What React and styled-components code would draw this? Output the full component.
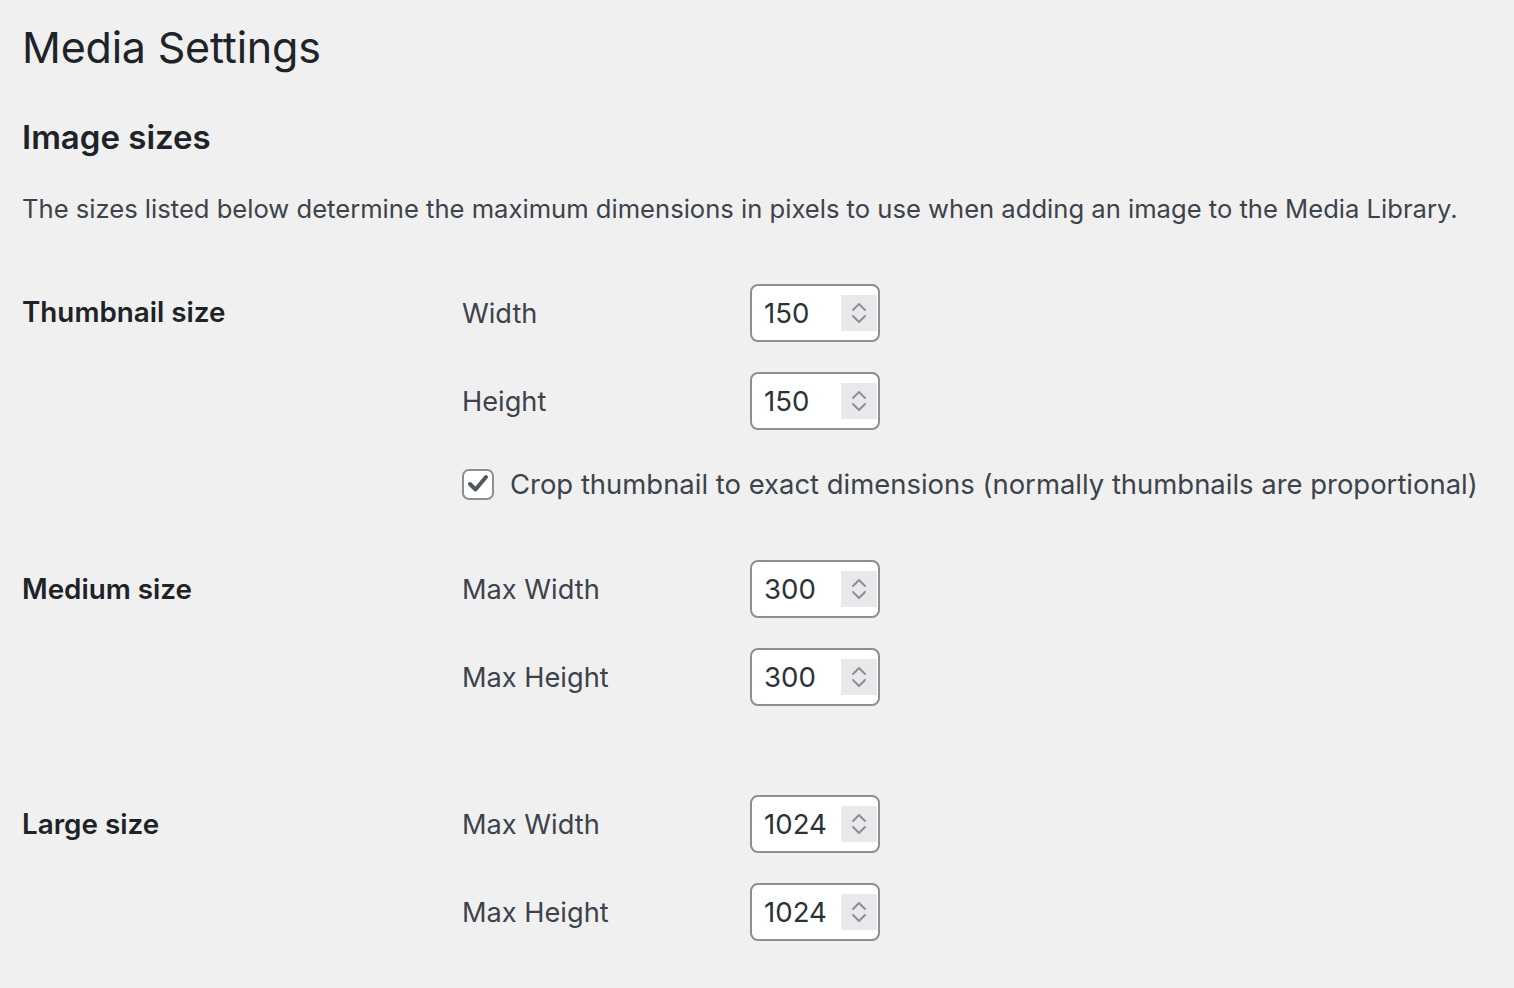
import React from "react";
import styled, { createGlobalStyle } from "styled-components";

const Global = createGlobalStyle`
  html, body { margin: 0; padding: 0; background: #f0f0f1; }
  body { font-family: Inter, "Liberation Sans", sans-serif; color: #3c434a; }
`;

const Page = styled.div`
  padding: 0 22px;
  min-height: 988px;
  box-sizing: border-box;
`;

const Title = styled.h1`
  margin: 0;
  padding-top: 19px;
  font-size: 43px;
  font-weight: 400;
  line-height: 56px;
  color: #1d2327;
  letter-spacing: -0.2px;
`;

const SectionTitle = styled.h2`
  margin: 0;
  padding-top: 42px;
  font-size: 33px;
  font-weight: 600;
  line-height: 40px;
  color: #1d2327;
`;

const Description = styled.p`
  margin: 0;
  padding-top: 32px;
  font-size: 25.6px;
  line-height: 40px;
  color: #3c434a;
`;

const Table = styled.div`
  display: grid;
  grid-template-columns: 440px 1fr;
  margin-top: 32px;
`;

const Heading = styled.div`
  font-size: 27.8px;
  font-weight: 600;
  color: #1d2327;
  padding-top: ${p => p.$top}px;
  line-height: 36px;
`;

const Cell = styled.div`
  display: flex;
  flex-direction: column;
  gap: 30px;
  padding-top: 23px;
  padding-bottom: ${p => p.$bottom}px;
`;

const FieldRow = styled.div`
  display: flex;
  align-items: center;
  height: 58px;
`;

const FieldLabel = styled.label`
  width: 288px;
  font-size: 27.2px;
  color: #3c434a;
`;

const InputBox = styled.div`
  width: 130px;
  height: 58px;
  flex-shrink: 0;
  box-sizing: border-box;
  border: 2px solid #8c8f94;
  border-radius: 8px;
  background: #fff;
  display: flex;
  align-items: center;
  justify-content: space-between;
  padding: 0 1px 0 12px;
`;

const Value = styled.span`
  font-size: 27.6px;
  color: #2c3338;
`;

const Spinner = styled.div`
  width: 36px;
  height: 36px;
  flex-shrink: 0;
  background: #e9e9ec;
  display: flex;
  align-items: center;
  justify-content: center;
`;

const CheckRow = styled.div`
  display: flex;
  align-items: center;
  gap: 16px;
  height: 34px;
  margin-top: 7px;
`;

const CheckBox = styled.span`
  width: 32px;
  height: 31px;
  box-sizing: border-box;
  border: 2px solid #8c8f94;
  border-radius: 7px;
  background: #fff;
  display: flex;
  align-items: center;
  justify-content: center;
`;

const CheckText = styled.span`
  font-size: 27.45px;
  color: #3c434a;
`;

const Chevrons = () => (
  <svg width="18" height="36" viewBox="0 0 18 36" fill="none" stroke="#8c8f94" strokeWidth="2" strokeLinecap="round" strokeLinejoin="round">
    <path d="M3 15 L9 9 L15 15" />
    <path d="M3 21 L9 27 L15 21" />
  </svg>
);

const NumberField = ({ value }) => (
  <InputBox>
    <Value>{value}</Value>
    <Spinner><Chevrons /></Spinner>
  </InputBox>
);

const Field = ({ label, value }) => (
  <FieldRow>
    <FieldLabel>{label}</FieldLabel>
    <NumberField value={value} />
  </FieldRow>
);

export default function App() {
  return (
    <Page>
      <Global />
      <Title>Media Settings</Title>
      <SectionTitle>Image sizes</SectionTitle>
      <Description>The sizes listed below determine the maximum dimensions in pixels to use when adding an image to the Media Library.</Description>
      <Table>
        <Heading $top={33}>Thumbnail size</Heading>
        <Cell $bottom={36}>
          <Field label="Width" value="150" />
          <Field label="Height" value="150" />
          <CheckRow>
            <CheckBox>
              <svg width="22" height="20" viewBox="0 0 22 20" fill="none" stroke="#50575e" strokeWidth="4" strokeLinecap="round" strokeLinejoin="round">
                <path d="M3 10 L8.5 15.5 L19 3" />
              </svg>
            </CheckBox>
            <CheckText>Crop thumbnail to exact dimensions (normally thumbnails are proportional)</CheckText>
          </CheckRow>
        </Cell>
        <Heading $top={34}>Medium size</Heading>
        <Cell $bottom={66}>
          <Field label="Max Width" value="300" />
          <Field label="Max Height" value="300" />
        </Cell>
        <Heading $top={34}>Large size</Heading>
        <Cell $bottom={0}>
          <Field label="Max Width" value="1024" />
          <Field label="Max Height" value="1024" />
        </Cell>
      </Table>
    </Page>
  );
}
